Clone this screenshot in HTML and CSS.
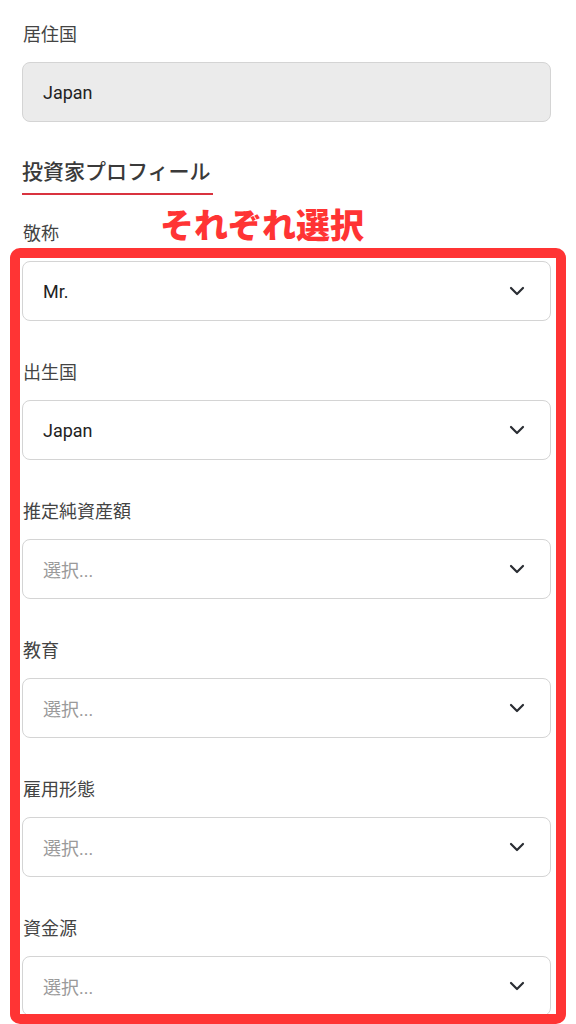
FILE: index.html
```html
<!DOCTYPE html>
<html lang="ja">
<head>
    <meta charset="UTF-8">
    <meta name="viewport" content="width=device-width, initial-scale=1.0">
    <title>投資家プロフィール</title>
    <link rel="stylesheet" href="styles.css">
</head>
<body>
  <div class="form">
    <div class="field">
        <p class="label">居住国</p>
        <div class="input disabled">Japan</div>
    </div>

    <h2 class="section-title">投資家プロフィール</h2>

    <div class="field">
        <p class="label">敬称</p>
        <div class="input select">
            <span>Mr.</span>
            <svg class="chevron" viewBox="0 0 16 10"><path d="M2 2l6 6 6-6"/></svg>
        </div>
    </div>
    <div class="field">
        <p class="label">出生国</p>
        <div class="input select">
            <span>Japan</span>
            <svg class="chevron" viewBox="0 0 16 10"><path d="M2 2l6 6 6-6"/></svg>
        </div>
    </div>
    <div class="field">
        <p class="label">推定純資産額</p>
        <div class="input select">
            <span class="placeholder">選択...</span>
            <svg class="chevron" viewBox="0 0 16 10"><path d="M2 2l6 6 6-6"/></svg>
        </div>
    </div>
    <div class="field">
        <p class="label">教育</p>
        <div class="input select">
            <span class="placeholder">選択...</span>
            <svg class="chevron" viewBox="0 0 16 10"><path d="M2 2l6 6 6-6"/></svg>
        </div>
    </div>
    <div class="field">
        <p class="label">雇用形態</p>
        <div class="input select">
            <span class="placeholder">選択...</span>
            <svg class="chevron" viewBox="0 0 16 10"><path d="M2 2l6 6 6-6"/></svg>
        </div>
    </div>
    <div class="field">
        <p class="label">資金源</p>
        <div class="input select">
            <span class="placeholder">選択...</span>
            <svg class="chevron" viewBox="0 0 16 10"><path d="M2 2l6 6 6-6"/></svg>
        </div>
    </div>
  </div>

  <!-- annotation layer -->
  <div class="note-box"></div>
  <p class="note-text">それぞれ選択</p>
</body>
</html>
```

FILE: styles.css
```css
*{
    margin: 0;
    padding: 0;
    box-sizing: border-box;
    --red:#ff3434;
    --border:#d4d4d4;
}
body{
    background: #fff;
    font-family: Roboto, "Noto Sans CJK JP", sans-serif;
    color: #333;
    position: relative;
    min-height: 1024px;
    overflow: hidden;
}
.form{
    width: 529px;
    margin-left: 22px;
    padding-top: 23px;
    display: flex;
    flex-direction: column;
    gap: 40px;
}
.field{
    display: flex;
    flex-direction: column;
    gap: 15px;
}
.label{
    font-size: 18px;
    line-height: 24px;
    color: #444;
    padding-left: 1px;
}
.input{
    height: 60px;
    border: 1px solid var(--border);
    border-radius: 8px;
    padding: 0 20px;
    display: flex;
    align-items: center;
    justify-content: space-between;
    font-size: 18px;
    color: #222;
}
.input.disabled{
    background: #ebebeb;
}
.placeholder{
    color: #9a9a9a;
}
.chevron{
    width: 16px;
    height: 10px;
    margin-right: 5px;
    fill: none;
    stroke: #2a2d33;
    stroke-width: 2.2;
    stroke-linecap: round;
    stroke-linejoin: round;
}
.section-title{
    align-self: flex-start;
    font-size: 21px;
    font-weight: 500;
    line-height: 28px;
    color: #3a3a3a;
    padding: 0 2px 7px 0;
    border-bottom: 2px solid #d9333f;
    margin: -4px 0 -13px;
}
.note-box{
    position: absolute;
    left: 10px;
    top: 248px;
    width: 556px;
    height: 776px;
    border: 10px solid var(--red);
    border-radius: 10px;
}
.note-text{
    position: absolute;
    left: 160px;
    top: 205px;
    font-family: "Noto Sans CJK JP", sans-serif;
    font-size: 34px;
    font-weight: 900;
    line-height: 1.1;
    color: var(--red);
}
```
